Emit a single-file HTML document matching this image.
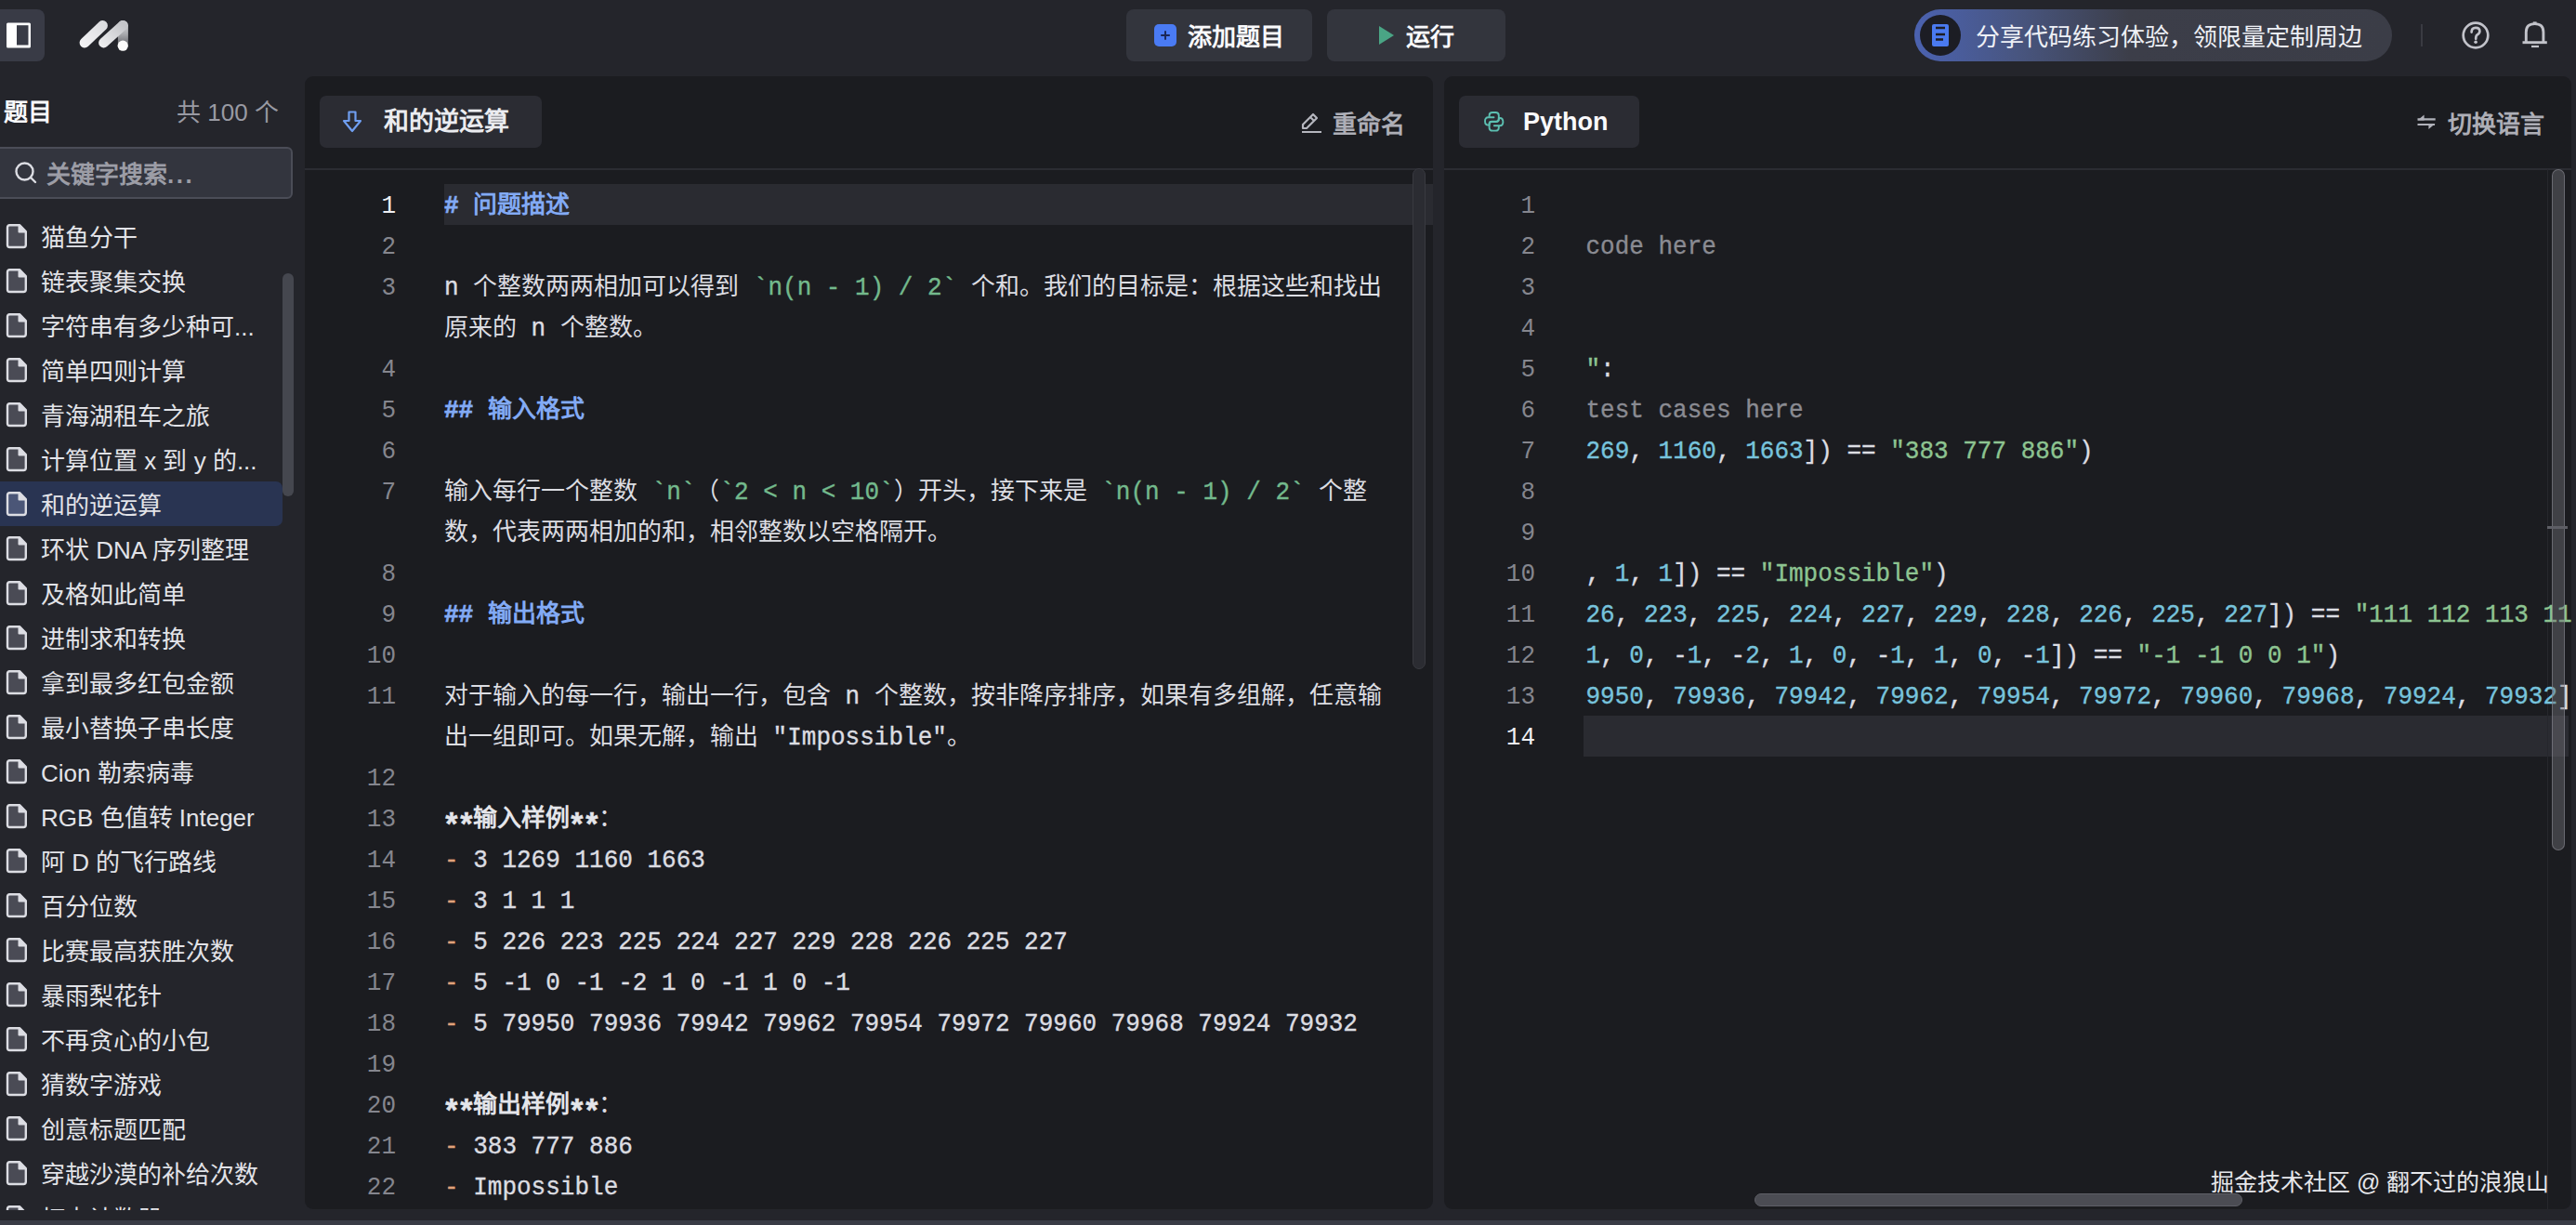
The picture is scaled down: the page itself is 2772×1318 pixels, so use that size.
<!DOCTYPE html>
<html lang="zh-CN"><head><meta charset="utf-8">
<style>
*{box-sizing:border-box}
html,body{margin:0;padding:0}
body{width:2772px;height:1318px;overflow:hidden;position:relative;background:#24252b;font-family:"Liberation Sans",sans-serif;color:#e6e7ec}
.abs{position:absolute}
.bottomband{position:absolute;left:0;top:1313px;width:2772px;height:5px;background:#393b45}
/* top bar */
.tog{position:absolute;left:-8px;top:10px;width:56px;height:56px;border-radius:8px;background:#393b46}
.btn{position:absolute;top:10px;height:56px;border-radius:8px;background:#33353d}
.btxt{position:absolute;font-size:26px;font-weight:bold;color:#fafafc;line-height:30px;white-space:nowrap}
.banner{position:absolute;left:2060px;top:10px;width:514px;height:56px;border-radius:28px;background:linear-gradient(90deg,#4b62b0 0%,#48557f 22%,#3c3e49 45%,#3b3d47 100%)}
.bcirc{position:absolute;left:2066px;top:16px;width:44px;height:44px;border-radius:22px;background:#1c1d24}
/* sidebar */
.item{position:absolute;left:0;width:304px;height:48px;border-radius:0 7px 7px 0}
.item.sel{background:#293452}
.item.sel .fi path:first-child{fill:#4b5677}
.item .fi{position:absolute;left:6px;top:10px}
.item span{position:absolute;left:44px;top:10px;font-size:26px;line-height:32px;color:#e2e3e8;white-space:nowrap}
.sscroll{position:absolute;left:304px;top:294px;width:12px;height:240px;border-radius:6px;background:#45474f}
.search{position:absolute;left:-10px;top:158px;width:325px;height:56px;border-radius:6px;background:#33353e;border:2px solid #4b4d57}
/* panels */
.panel{position:absolute;top:82px;height:1219px;background:#1b1c20;border-radius:9px;overflow:hidden}
.hdr{position:absolute;left:0;top:0;width:100%;height:100.5px;border-bottom:2px solid #2b2c32}
.tab{position:absolute;top:21px;height:56px;border-radius:7px;background:#2b2c33}
.ln{position:absolute;margin-top:1.5px;width:60px;transform:scaleY(1.06);transform-origin:50% 56%;text-align:right;font-family:"Liberation Mono",monospace;font-size:26px;line-height:44px;height:44px;color:#85868e}
.ln.act{color:#eeeff3}
.row{position:absolute;margin-top:2px;white-space:pre;font-family:"Liberation Mono",monospace;font-size:26px;line-height:44px;height:44px;color:#dcdde2}
.hl{position:absolute;height:44px;background:#2a2b31}
.t{color:#dcdde2}
.g{color:#73b98c}
.hb{color:#82aaf5;font-weight:bold}
.hb.a{-webkit-text-stroke:0.7px #82aaf5}
.bw{color:#e4e5ea;font-weight:bold}
.o{color:#e0a27a}
.n{color:#77c3dc}
.s{color:#8dc491}
.cm{color:#8a8b92}
.a{display:inline-block;transform:translateY(-0.7px) scaleY(1.06);transform-origin:50% 56%;-webkit-text-stroke:0.35px}
.ast.a{color:#e4e5ea;font-weight:bold;transform:translateY(9px) scale(1.3,1.35)}
.vs{position:absolute;width:14px;border-radius:7px}
</style></head><body>

<!-- top bar -->
<div class="tog"></div>
<svg class="abs" style="left:6px;top:24px" width="28" height="28" viewBox="0 0 28 28">
  <rect x="1" y="0.6" width="26" height="26.8" rx="1.5" fill="#fff"/>
  <rect x="12" y="3.2" width="12.5" height="21.3" fill="#393b46"/>
</svg>
<svg class="abs" style="left:80px;top:18px" width="64" height="42" viewBox="0 0 64 42">
  <defs>
    <linearGradient id="lg1" gradientUnits="userSpaceOnUse" x1="10" y1="33" x2="32" y2="9"><stop offset="0" stop-color="#f4f4f6"/><stop offset="1" stop-color="#dcdde0"/></linearGradient>
    <linearGradient id="lg3" gradientUnits="userSpaceOnUse" x1="31" y1="33" x2="53" y2="9"><stop offset="0" stop-color="#eeeef0"/><stop offset="1" stop-color="#c4c5c9"/></linearGradient>
    <linearGradient id="lg2" gradientUnits="userSpaceOnUse" x1="0" y1="6" x2="0" y2="34"><stop offset="0" stop-color="#d9dadd"/><stop offset="0.45" stop-color="#a9aaae"/><stop offset="1" stop-color="#55565b"/></linearGradient>
  </defs>
  <line x1="52.4" y1="9.5" x2="52.4" y2="31" stroke="url(#lg2)" stroke-width="11" stroke-linecap="round"/>
  <line x1="11" y1="28" x2="30.5" y2="9.5" stroke="url(#lg1)" stroke-width="10.8" stroke-linecap="round"/>
  <line x1="31.5" y1="28" x2="52" y2="9.5" stroke="url(#lg3)" stroke-width="10.8" stroke-linecap="round"/>
  <circle cx="52.2" cy="31.2" r="5.6" fill="#fbfbfb"/>
</svg>

<div class="btn" style="left:1212px;width:200px"></div>
<svg class="abs" style="left:1242px;top:26px" width="24" height="24" viewBox="0 0 24 24">
  <rect x="0" y="0" width="24" height="24" rx="5" fill="#4a7bf4"/>
  <path d="M12 7.2v9.6M7.2 12h9.6" stroke="#1b2654" stroke-width="1.9"/>
</svg>
<div class="btxt" style="left:1278px;top:24.5px">添加题目</div>

<div class="btn" style="left:1428px;width:192px"></div>
<svg class="abs" style="left:1483px;top:27px" width="18" height="22" viewBox="0 0 18 22">
  <path d="M1 1 L17 11 L1 21 Z" fill="#4aa585"/>
</svg>
<div class="btxt" style="left:1513px;top:24.5px">运行</div>

<div class="banner"></div>
<div class="bcirc"></div>
<svg class="abs" style="left:2077px;top:25px" width="22" height="26" viewBox="0 0 22 26">
  <path d="M2 3 Q2 1 4 1 H18 Q20 1 20 3 V23 Q20 25 18 25 H4 Q2 25 2 23 Z" fill="#4a7af0"/>
  <path d="M6 5 H16 M6 12 H16 M6 17.5 H14" stroke="#1c1d24" stroke-width="2.4"/>
</svg>
<div class="btxt" style="left:2126px;top:25px;font-weight:500;color:#eef0f6">分享代码练习体验，领限量定制周边</div>
<div class="abs" style="left:2605px;top:26px;width:2px;height:24px;background:#3a3b42"></div>
<svg class="abs" style="left:2647px;top:21px" width="34" height="34" viewBox="0 0 34 34">
  <circle cx="17" cy="17" r="13.3" fill="none" stroke="#c2c3ca" stroke-width="2.7"/>
  <path d="M12.6 13.6 Q12.6 8.8 17 8.8 Q21.4 8.8 21.4 12.6 Q21.4 15 18.8 16.4 Q17.2 17.4 17.2 20.8" fill="none" stroke="#c2c3ca" stroke-width="2.7" stroke-linecap="round"/>
  <circle cx="17.1" cy="24.2" r="1.8" fill="#c2c3ca"/>
</svg>
<svg class="abs" style="left:2712px;top:20px" width="32" height="34" viewBox="0 0 32 34">
  <path d="M6.3 25 V14.5 Q6.3 5.6 15.6 5.6 Q24.9 5.6 24.9 14.5 V25" fill="none" stroke="#c2c3ca" stroke-width="2.9"/>
  <path d="M2.5 25.7 H28.8" stroke="#c2c3ca" stroke-width="2.9"/>
  <path d="M12 30 H20" stroke="#c2c3ca" stroke-width="2.2"/>
  <path d="M13.8 4.6 H17.6" stroke="#c2c3ca" stroke-width="2.4"/>
</svg>

<!-- sidebar -->
<div class="btxt" style="left:4px;top:106px;color:#fafafc">题目</div>
<div class="abs" style="left:190px;top:106px;font-size:26px;line-height:30px;color:#999aa3;white-space:nowrap">共 100 个</div>
<div class="search"></div>
<svg class="abs" style="left:15px;top:173px" width="26" height="26" viewBox="0 0 26 26">
  <circle cx="11.5" cy="11.5" r="9" fill="none" stroke="#dcdde3" stroke-width="2.4"/>
  <path d="M18 18 L23 23" stroke="#dcdde3" stroke-width="2.4" stroke-linecap="round"/>
</svg>
<div class="abs" style="left:50px;top:172.5px;font-size:26px;line-height:30px;color:#9c9da6;white-space:nowrap;font-weight:bold">关键字搜索<span style="letter-spacing:2.5px">...</span></div>
<div class="abs" style="left:0;top:228px;width:320px;height:1074px;overflow:hidden">
<div class="abs" style="left:0;top:-228px;width:320px;height:1400px">
<div class="item" style="top:230px"><svg class="fi" width="24" height="28" viewBox="0 0 24 28"><path d="M4 2.2 H15 L21.8 9 V23.5 Q21.8 26 19.3 26 H4.5 Q2 26 2 23.5 V4.7 Q2 2.2 4.5 2.2 Z" fill="#4a4b55" stroke="#dcdde3" stroke-width="2.4" stroke-linejoin="round"/><path d="M14.5 2.2 V9.5 H21.8" fill="#dcdde3" stroke="#dcdde3" stroke-width="2" stroke-linejoin="round"/></svg><span>猫鱼分干</span></div>
<div class="item" style="top:278px"><svg class="fi" width="24" height="28" viewBox="0 0 24 28"><path d="M4 2.2 H15 L21.8 9 V23.5 Q21.8 26 19.3 26 H4.5 Q2 26 2 23.5 V4.7 Q2 2.2 4.5 2.2 Z" fill="#4a4b55" stroke="#dcdde3" stroke-width="2.4" stroke-linejoin="round"/><path d="M14.5 2.2 V9.5 H21.8" fill="#dcdde3" stroke="#dcdde3" stroke-width="2" stroke-linejoin="round"/></svg><span>链表聚集交换</span></div>
<div class="item" style="top:326px"><svg class="fi" width="24" height="28" viewBox="0 0 24 28"><path d="M4 2.2 H15 L21.8 9 V23.5 Q21.8 26 19.3 26 H4.5 Q2 26 2 23.5 V4.7 Q2 2.2 4.5 2.2 Z" fill="#4a4b55" stroke="#dcdde3" stroke-width="2.4" stroke-linejoin="round"/><path d="M14.5 2.2 V9.5 H21.8" fill="#dcdde3" stroke="#dcdde3" stroke-width="2" stroke-linejoin="round"/></svg><span>字符串有多少种可...</span></div>
<div class="item" style="top:374px"><svg class="fi" width="24" height="28" viewBox="0 0 24 28"><path d="M4 2.2 H15 L21.8 9 V23.5 Q21.8 26 19.3 26 H4.5 Q2 26 2 23.5 V4.7 Q2 2.2 4.5 2.2 Z" fill="#4a4b55" stroke="#dcdde3" stroke-width="2.4" stroke-linejoin="round"/><path d="M14.5 2.2 V9.5 H21.8" fill="#dcdde3" stroke="#dcdde3" stroke-width="2" stroke-linejoin="round"/></svg><span>简单四则计算</span></div>
<div class="item" style="top:422px"><svg class="fi" width="24" height="28" viewBox="0 0 24 28"><path d="M4 2.2 H15 L21.8 9 V23.5 Q21.8 26 19.3 26 H4.5 Q2 26 2 23.5 V4.7 Q2 2.2 4.5 2.2 Z" fill="#4a4b55" stroke="#dcdde3" stroke-width="2.4" stroke-linejoin="round"/><path d="M14.5 2.2 V9.5 H21.8" fill="#dcdde3" stroke="#dcdde3" stroke-width="2" stroke-linejoin="round"/></svg><span>青海湖租车之旅</span></div>
<div class="item" style="top:470px"><svg class="fi" width="24" height="28" viewBox="0 0 24 28"><path d="M4 2.2 H15 L21.8 9 V23.5 Q21.8 26 19.3 26 H4.5 Q2 26 2 23.5 V4.7 Q2 2.2 4.5 2.2 Z" fill="#4a4b55" stroke="#dcdde3" stroke-width="2.4" stroke-linejoin="round"/><path d="M14.5 2.2 V9.5 H21.8" fill="#dcdde3" stroke="#dcdde3" stroke-width="2" stroke-linejoin="round"/></svg><span>计算位置 x 到 y 的...</span></div>
<div class="item sel" style="top:518px"><svg class="fi" width="24" height="28" viewBox="0 0 24 28"><path d="M4 2.2 H15 L21.8 9 V23.5 Q21.8 26 19.3 26 H4.5 Q2 26 2 23.5 V4.7 Q2 2.2 4.5 2.2 Z" fill="#4a4b55" stroke="#dcdde3" stroke-width="2.4" stroke-linejoin="round"/><path d="M14.5 2.2 V9.5 H21.8" fill="#dcdde3" stroke="#dcdde3" stroke-width="2" stroke-linejoin="round"/></svg><span>和的逆运算</span></div>
<div class="item" style="top:566px"><svg class="fi" width="24" height="28" viewBox="0 0 24 28"><path d="M4 2.2 H15 L21.8 9 V23.5 Q21.8 26 19.3 26 H4.5 Q2 26 2 23.5 V4.7 Q2 2.2 4.5 2.2 Z" fill="#4a4b55" stroke="#dcdde3" stroke-width="2.4" stroke-linejoin="round"/><path d="M14.5 2.2 V9.5 H21.8" fill="#dcdde3" stroke="#dcdde3" stroke-width="2" stroke-linejoin="round"/></svg><span>环状 DNA 序列整理</span></div>
<div class="item" style="top:614px"><svg class="fi" width="24" height="28" viewBox="0 0 24 28"><path d="M4 2.2 H15 L21.8 9 V23.5 Q21.8 26 19.3 26 H4.5 Q2 26 2 23.5 V4.7 Q2 2.2 4.5 2.2 Z" fill="#4a4b55" stroke="#dcdde3" stroke-width="2.4" stroke-linejoin="round"/><path d="M14.5 2.2 V9.5 H21.8" fill="#dcdde3" stroke="#dcdde3" stroke-width="2" stroke-linejoin="round"/></svg><span>及格如此简单</span></div>
<div class="item" style="top:662px"><svg class="fi" width="24" height="28" viewBox="0 0 24 28"><path d="M4 2.2 H15 L21.8 9 V23.5 Q21.8 26 19.3 26 H4.5 Q2 26 2 23.5 V4.7 Q2 2.2 4.5 2.2 Z" fill="#4a4b55" stroke="#dcdde3" stroke-width="2.4" stroke-linejoin="round"/><path d="M14.5 2.2 V9.5 H21.8" fill="#dcdde3" stroke="#dcdde3" stroke-width="2" stroke-linejoin="round"/></svg><span>进制求和转换</span></div>
<div class="item" style="top:710px"><svg class="fi" width="24" height="28" viewBox="0 0 24 28"><path d="M4 2.2 H15 L21.8 9 V23.5 Q21.8 26 19.3 26 H4.5 Q2 26 2 23.5 V4.7 Q2 2.2 4.5 2.2 Z" fill="#4a4b55" stroke="#dcdde3" stroke-width="2.4" stroke-linejoin="round"/><path d="M14.5 2.2 V9.5 H21.8" fill="#dcdde3" stroke="#dcdde3" stroke-width="2" stroke-linejoin="round"/></svg><span>拿到最多红包金额</span></div>
<div class="item" style="top:758px"><svg class="fi" width="24" height="28" viewBox="0 0 24 28"><path d="M4 2.2 H15 L21.8 9 V23.5 Q21.8 26 19.3 26 H4.5 Q2 26 2 23.5 V4.7 Q2 2.2 4.5 2.2 Z" fill="#4a4b55" stroke="#dcdde3" stroke-width="2.4" stroke-linejoin="round"/><path d="M14.5 2.2 V9.5 H21.8" fill="#dcdde3" stroke="#dcdde3" stroke-width="2" stroke-linejoin="round"/></svg><span>最小替换子串长度</span></div>
<div class="item" style="top:806px"><svg class="fi" width="24" height="28" viewBox="0 0 24 28"><path d="M4 2.2 H15 L21.8 9 V23.5 Q21.8 26 19.3 26 H4.5 Q2 26 2 23.5 V4.7 Q2 2.2 4.5 2.2 Z" fill="#4a4b55" stroke="#dcdde3" stroke-width="2.4" stroke-linejoin="round"/><path d="M14.5 2.2 V9.5 H21.8" fill="#dcdde3" stroke="#dcdde3" stroke-width="2" stroke-linejoin="round"/></svg><span>Cion 勒索病毒</span></div>
<div class="item" style="top:854px"><svg class="fi" width="24" height="28" viewBox="0 0 24 28"><path d="M4 2.2 H15 L21.8 9 V23.5 Q21.8 26 19.3 26 H4.5 Q2 26 2 23.5 V4.7 Q2 2.2 4.5 2.2 Z" fill="#4a4b55" stroke="#dcdde3" stroke-width="2.4" stroke-linejoin="round"/><path d="M14.5 2.2 V9.5 H21.8" fill="#dcdde3" stroke="#dcdde3" stroke-width="2" stroke-linejoin="round"/></svg><span>RGB 色值转 Integer</span></div>
<div class="item" style="top:902px"><svg class="fi" width="24" height="28" viewBox="0 0 24 28"><path d="M4 2.2 H15 L21.8 9 V23.5 Q21.8 26 19.3 26 H4.5 Q2 26 2 23.5 V4.7 Q2 2.2 4.5 2.2 Z" fill="#4a4b55" stroke="#dcdde3" stroke-width="2.4" stroke-linejoin="round"/><path d="M14.5 2.2 V9.5 H21.8" fill="#dcdde3" stroke="#dcdde3" stroke-width="2" stroke-linejoin="round"/></svg><span>阿 D 的飞行路线</span></div>
<div class="item" style="top:950px"><svg class="fi" width="24" height="28" viewBox="0 0 24 28"><path d="M4 2.2 H15 L21.8 9 V23.5 Q21.8 26 19.3 26 H4.5 Q2 26 2 23.5 V4.7 Q2 2.2 4.5 2.2 Z" fill="#4a4b55" stroke="#dcdde3" stroke-width="2.4" stroke-linejoin="round"/><path d="M14.5 2.2 V9.5 H21.8" fill="#dcdde3" stroke="#dcdde3" stroke-width="2" stroke-linejoin="round"/></svg><span>百分位数</span></div>
<div class="item" style="top:998px"><svg class="fi" width="24" height="28" viewBox="0 0 24 28"><path d="M4 2.2 H15 L21.8 9 V23.5 Q21.8 26 19.3 26 H4.5 Q2 26 2 23.5 V4.7 Q2 2.2 4.5 2.2 Z" fill="#4a4b55" stroke="#dcdde3" stroke-width="2.4" stroke-linejoin="round"/><path d="M14.5 2.2 V9.5 H21.8" fill="#dcdde3" stroke="#dcdde3" stroke-width="2" stroke-linejoin="round"/></svg><span>比赛最高获胜次数</span></div>
<div class="item" style="top:1046px"><svg class="fi" width="24" height="28" viewBox="0 0 24 28"><path d="M4 2.2 H15 L21.8 9 V23.5 Q21.8 26 19.3 26 H4.5 Q2 26 2 23.5 V4.7 Q2 2.2 4.5 2.2 Z" fill="#4a4b55" stroke="#dcdde3" stroke-width="2.4" stroke-linejoin="round"/><path d="M14.5 2.2 V9.5 H21.8" fill="#dcdde3" stroke="#dcdde3" stroke-width="2" stroke-linejoin="round"/></svg><span>暴雨梨花针</span></div>
<div class="item" style="top:1094px"><svg class="fi" width="24" height="28" viewBox="0 0 24 28"><path d="M4 2.2 H15 L21.8 9 V23.5 Q21.8 26 19.3 26 H4.5 Q2 26 2 23.5 V4.7 Q2 2.2 4.5 2.2 Z" fill="#4a4b55" stroke="#dcdde3" stroke-width="2.4" stroke-linejoin="round"/><path d="M14.5 2.2 V9.5 H21.8" fill="#dcdde3" stroke="#dcdde3" stroke-width="2" stroke-linejoin="round"/></svg><span>不再贪心的小包</span></div>
<div class="item" style="top:1142px"><svg class="fi" width="24" height="28" viewBox="0 0 24 28"><path d="M4 2.2 H15 L21.8 9 V23.5 Q21.8 26 19.3 26 H4.5 Q2 26 2 23.5 V4.7 Q2 2.2 4.5 2.2 Z" fill="#4a4b55" stroke="#dcdde3" stroke-width="2.4" stroke-linejoin="round"/><path d="M14.5 2.2 V9.5 H21.8" fill="#dcdde3" stroke="#dcdde3" stroke-width="2" stroke-linejoin="round"/></svg><span>猜数字游戏</span></div>
<div class="item" style="top:1190px"><svg class="fi" width="24" height="28" viewBox="0 0 24 28"><path d="M4 2.2 H15 L21.8 9 V23.5 Q21.8 26 19.3 26 H4.5 Q2 26 2 23.5 V4.7 Q2 2.2 4.5 2.2 Z" fill="#4a4b55" stroke="#dcdde3" stroke-width="2.4" stroke-linejoin="round"/><path d="M14.5 2.2 V9.5 H21.8" fill="#dcdde3" stroke="#dcdde3" stroke-width="2" stroke-linejoin="round"/></svg><span>创意标题匹配</span></div>
<div class="item" style="top:1238px"><svg class="fi" width="24" height="28" viewBox="0 0 24 28"><path d="M4 2.2 H15 L21.8 9 V23.5 Q21.8 26 19.3 26 H4.5 Q2 26 2 23.5 V4.7 Q2 2.2 4.5 2.2 Z" fill="#4a4b55" stroke="#dcdde3" stroke-width="2.4" stroke-linejoin="round"/><path d="M14.5 2.2 V9.5 H21.8" fill="#dcdde3" stroke="#dcdde3" stroke-width="2" stroke-linejoin="round"/></svg><span>穿越沙漠的补给次数</span></div>
<div class="item" style="top:1286px"><svg class="fi" width="24" height="28" viewBox="0 0 24 28"><path d="M4 2.2 H15 L21.8 9 V23.5 Q21.8 26 19.3 26 H4.5 Q2 26 2 23.5 V4.7 Q2 2.2 4.5 2.2 Z" fill="#4a4b55" stroke="#dcdde3" stroke-width="2.4" stroke-linejoin="round"/><path d="M14.5 2.2 V9.5 H21.8" fill="#dcdde3" stroke="#dcdde3" stroke-width="2" stroke-linejoin="round"/></svg><span>打卡计数器</span></div>
</div>
</div>
<div class="sscroll"></div>

<!-- middle panel -->
<div class="panel" style="left:328px;width:1214px">
  <div class="hdr"></div>
  <div class="tab" style="left:16px;width:239px"></div>
  <svg class="abs" style="left:40px;top:37px" width="22" height="24" viewBox="0 0 22 24">
    <path d="M7.5 1.5 H14.5 V11 H20 L11 22 L2 11 H7.5 Z" fill="none" stroke="#6f9ef0" stroke-width="2.2" stroke-linejoin="round"/>
  </svg>
  <div class="btxt" style="left:85px;top:34px;font-size:27px;color:#ebecf0">和的逆运算</div>
  <svg class="abs" style="left:1071px;top:38px" width="24" height="24" viewBox="0 0 24 24">
    <path d="M3 18 L3 14 L14 3 L18 7 L7 18 Z M11 6 L15 10" fill="none" stroke="#b5b6be" stroke-width="2.2" stroke-linejoin="round"/>
    <path d="M2 22 H23" stroke="#b5b6be" stroke-width="2.2"/>
  </svg>
  <div class="btxt" style="left:1106px;top:36.5px;color:#adaeb6;font-weight:bold">重命名</div>
  <div class="hl" style="left:150px;top:116px;width:1064px"></div>
  <div class="vs" style="left:1192px;top:99px;height:539px;background:#2b2c32;border:1.5px solid #393a40"></div>
  <div class="abs" style="left:-328px;top:-82px">
<div class="ln act" style="left:366px;top:198px">1</div>
<div class="ln" style="left:366px;top:242px">2</div>
<div class="ln" style="left:366px;top:286px">3</div>
<div class="ln" style="left:366px;top:374px">4</div>
<div class="ln" style="left:366px;top:418px">5</div>
<div class="ln" style="left:366px;top:462px">6</div>
<div class="ln" style="left:366px;top:506px">7</div>
<div class="ln" style="left:366px;top:594px">8</div>
<div class="ln" style="left:366px;top:638px">9</div>
<div class="ln" style="left:366px;top:682px">10</div>
<div class="ln" style="left:366px;top:726px">11</div>
<div class="ln" style="left:366px;top:814px">12</div>
<div class="ln" style="left:366px;top:858px">13</div>
<div class="ln" style="left:366px;top:902px">14</div>
<div class="ln" style="left:366px;top:946px">15</div>
<div class="ln" style="left:366px;top:990px">16</div>
<div class="ln" style="left:366px;top:1034px">17</div>
<div class="ln" style="left:366px;top:1078px">18</div>
<div class="ln" style="left:366px;top:1122px">19</div>
<div class="ln" style="left:366px;top:1166px">20</div>
<div class="ln" style="left:366px;top:1210px">21</div>
<div class="ln" style="left:366px;top:1254px">22</div>
<div class="ln" style="left:366px;top:1298px">23</div>
  </div>
  <div class="abs" style="left:-328px;top:-82px">
<div class="row" style="left:478px;top:198px"><span class="hb a"># </span><span class="hb">问题描述</span></div>
<div class="row" style="left:478px;top:286px"><span class="t a">n </span><span class="t">个整数两两相加可以得到</span><span class="t a"> </span><span class="g a">`n(n - 1) / 2`</span><span class="t a"> </span><span class="t">个和。我们的目标是：根据这些和找出</span></div>
<div class="row" style="left:478px;top:330px"><span class="t">原来的</span><span class="t a"> n </span><span class="t">个整数。</span></div>
<div class="row" style="left:478px;top:418px"><span class="hb a">## </span><span class="hb">输入格式</span></div>
<div class="row" style="left:478px;top:506px"><span class="t">输入每行一个整数</span><span class="t a"> </span><span class="g a">`n`</span><span class="t">（</span><span class="g a">`2 &lt; n &lt; 10`</span><span class="t">）开头，接下来是</span><span class="t a"> </span><span class="g a">`n(n - 1) / 2`</span><span class="t a"> </span><span class="t">个整</span></div>
<div class="row" style="left:478px;top:550px"><span class="t">数，代表两两相加的和，相邻整数以空格隔开。</span></div>
<div class="row" style="left:478px;top:638px"><span class="hb a">## </span><span class="hb">输出格式</span></div>
<div class="row" style="left:478px;top:726px"><span class="t">对于输入的每一行，输出一行，包含</span><span class="t a"> n </span><span class="t">个整数，按非降序排序，如果有多组解，任意输</span></div>
<div class="row" style="left:478px;top:770px"><span class="t">出一组即可。如果无解，输出</span><span class="t a"> "Impossible"</span><span class="t">。</span></div>
<div class="row" style="left:478px;top:858px"><span class="ast a">*</span><span class="ast a">*</span><span class="bw">输入样例</span><span class="ast a">*</span><span class="ast a">*</span><span class="t">：</span></div>
<div class="row" style="left:478px;top:902px"><span class="o a">-</span><span class="t a"> 3 1269 1160 1663</span></div>
<div class="row" style="left:478px;top:946px"><span class="o a">-</span><span class="t a"> 3 1 1 1</span></div>
<div class="row" style="left:478px;top:990px"><span class="o a">-</span><span class="t a"> 5 226 223 225 224 227 229 228 226 225 227</span></div>
<div class="row" style="left:478px;top:1034px"><span class="o a">-</span><span class="t a"> 5 -1 0 -1 -2 1 0 -1 1 0 -1</span></div>
<div class="row" style="left:478px;top:1078px"><span class="o a">-</span><span class="t a"> 5 79950 79936 79942 79962 79954 79972 79960 79968 79924 79932</span></div>
<div class="row" style="left:478px;top:1166px"><span class="ast a">*</span><span class="ast a">*</span><span class="bw">输出样例</span><span class="ast a">*</span><span class="ast a">*</span><span class="t">：</span></div>
<div class="row" style="left:478px;top:1210px"><span class="o a">-</span><span class="t a"> 383 777 886</span></div>
<div class="row" style="left:478px;top:1254px"><span class="o a">-</span><span class="t a"> Impossible</span></div>
<div class="row" style="left:478px;top:1298px"><span class="o a">-</span><span class="t a"> 111 112 113 114</span></div>
  </div>
</div>

<!-- right panel -->
<div class="panel" style="left:1554px;width:1213px">
  <div class="hdr"></div>
  <div class="tab" style="left:16px;width:194px"></div>
  <svg class="abs" style="left:43px;top:38px" width="22" height="22" viewBox="0 0 22 22">
    <g fill="none" stroke="#5cbfb1" stroke-width="1.9" stroke-linejoin="round" stroke-linecap="round">
    <path d="M10.5 6.3 H4.5 Q1 6.3 1 10.3 Q1 14.6 4.5 14.6 H5.6 V13 Q5.6 10.6 8.2 10.6 H13.2 Q15.8 10.6 15.8 8 V4.2 Q15.8 1 12.3 1 H9 Q5.6 1 5.6 4.2 V5.5"/>
    <path d="M10.5 6.3 H4.5 Q1 6.3 1 10.3 Q1 14.6 4.5 14.6 H5.6 V13 Q5.6 10.6 8.2 10.6 H13.2 Q15.8 10.6 15.8 8 V4.2 Q15.8 1 12.3 1 H9 Q5.6 1 5.6 4.2 V5.5" transform="rotate(180 10.7 10.8)"/>
    </g>
  </svg>
  <div class="btxt" style="left:85px;top:33.5px;font-size:27px;color:#fafafc">Python</div>
  <svg class="abs" style="left:1046px;top:38px" width="24" height="24" viewBox="0 0 24 24">
    <path d="M1.5 8.3 H20.7 M1.5 14 H20" stroke="#b0b1b9" stroke-width="2.2"/>
    <path d="M1.5 9.4 L8.6 3.4 V9.4 Z M20.5 12.9 L13.4 19 V12.9 Z" fill="#b0b1b9"/>
  </svg>
  <div class="btxt" style="left:1080px;top:36.5px;color:#adaeb6;font-weight:bold">切换语言</div>
  <div class="hl" style="left:150px;top:688px;width:1060px"></div>
  <div class="abs" style="left:1187px;top:100px;width:1px;height:1119px;background:#26272d"></div>
  <div class="abs" style="left:-1554px;top:-82px">
<div class="ln" style="left:1592px;top:198px">1</div>
<div class="ln" style="left:1592px;top:242px">2</div>
<div class="ln" style="left:1592px;top:286px">3</div>
<div class="ln" style="left:1592px;top:330px">4</div>
<div class="ln" style="left:1592px;top:374px">5</div>
<div class="ln" style="left:1592px;top:418px">6</div>
<div class="ln" style="left:1592px;top:462px">7</div>
<div class="ln" style="left:1592px;top:506px">8</div>
<div class="ln" style="left:1592px;top:550px">9</div>
<div class="ln" style="left:1592px;top:594px">10</div>
<div class="ln" style="left:1592px;top:638px">11</div>
<div class="ln" style="left:1592px;top:682px">12</div>
<div class="ln" style="left:1592px;top:726px">13</div>
<div class="ln act" style="left:1592px;top:770px">14</div>
  </div>
  <div class="abs" style="left:150px;top:0;width:1063px;height:1219px;overflow:hidden">
    <div class="abs" style="left:-1704px;top:-82px">
<div class="row" style="left:1706.5px;top:242px"><span class="cm a">code here</span></div>
<div class="row" style="left:1706.5px;top:374px"><span class="s a">"</span><span class="t a">:</span></div>
<div class="row" style="left:1706.5px;top:418px"><span class="cm a">test cases here</span></div>
<div class="row" style="left:1706.5px;top:462px"><span class="n a">269</span><span class="t a">, </span><span class="n a">1160</span><span class="t a">, </span><span class="n a">1663</span><span class="t a">]) == </span><span class="s a">"383 777 886"</span><span class="t a">)</span></div>
<div class="row" style="left:1706.5px;top:594px"><span class="t a">, </span><span class="n a">1</span><span class="t a">, </span><span class="n a">1</span><span class="t a">]) == </span><span class="s a">"Impossible"</span><span class="t a">)</span></div>
<div class="row" style="left:1706.5px;top:638px"><span class="n a">26</span><span class="t a">, </span><span class="n a">223</span><span class="t a">, </span><span class="n a">225</span><span class="t a">, </span><span class="n a">224</span><span class="t a">, </span><span class="n a">227</span><span class="t a">, </span><span class="n a">229</span><span class="t a">, </span><span class="n a">228</span><span class="t a">, </span><span class="n a">226</span><span class="t a">, </span><span class="n a">225</span><span class="t a">, </span><span class="n a">227</span><span class="t a">]) == </span><span class="s a">"111 112 113 114 115 116"</span><span class="t a">)</span></div>
<div class="row" style="left:1706.5px;top:682px"><span class="n a">1</span><span class="t a">, </span><span class="n a">0</span><span class="t a">, -</span><span class="n a">1</span><span class="t a">, -</span><span class="n a">2</span><span class="t a">, </span><span class="n a">1</span><span class="t a">, </span><span class="n a">0</span><span class="t a">, -</span><span class="n a">1</span><span class="t a">, </span><span class="n a">1</span><span class="t a">, </span><span class="n a">0</span><span class="t a">, -</span><span class="n a">1</span><span class="t a">]) == </span><span class="s a">"-1 -1 0 0 1"</span><span class="t a">)</span></div>
<div class="row" style="left:1706.5px;top:726px"><span class="n a">9950</span><span class="t a">, </span><span class="n a">79936</span><span class="t a">, </span><span class="n a">79942</span><span class="t a">, </span><span class="n a">79962</span><span class="t a">, </span><span class="n a">79954</span><span class="t a">, </span><span class="n a">79972</span><span class="t a">, </span><span class="n a">79960</span><span class="t a">, </span><span class="n a">79968</span><span class="t a">, </span><span class="n a">79924</span><span class="t a">, </span><span class="n a">79932</span><span class="t a">])</span></div>
    </div>
  </div>
  <div class="vs" style="left:1192px;top:100px;height:733px;background:rgba(110,111,118,0.45);border:1.5px solid rgba(140,141,148,0.55)"></div>
  <div class="abs" style="left:1187px;top:484px;width:22px;height:3px;background:#5d5e65"></div>
  <div class="abs" style="left:825px;top:1175px;font-size:25px;line-height:30px;color:#e6e7eb;white-space:nowrap">掘金技术社区 @ 翻不过的浪狼山</div>
  <div class="abs" style="left:334px;top:1202px;width:525px;height:14px;border-radius:7px;background:#4b4c53;border:1.5px solid #5e5f66"></div>
</div>

<div class="bottomband"></div>
</body></html>
